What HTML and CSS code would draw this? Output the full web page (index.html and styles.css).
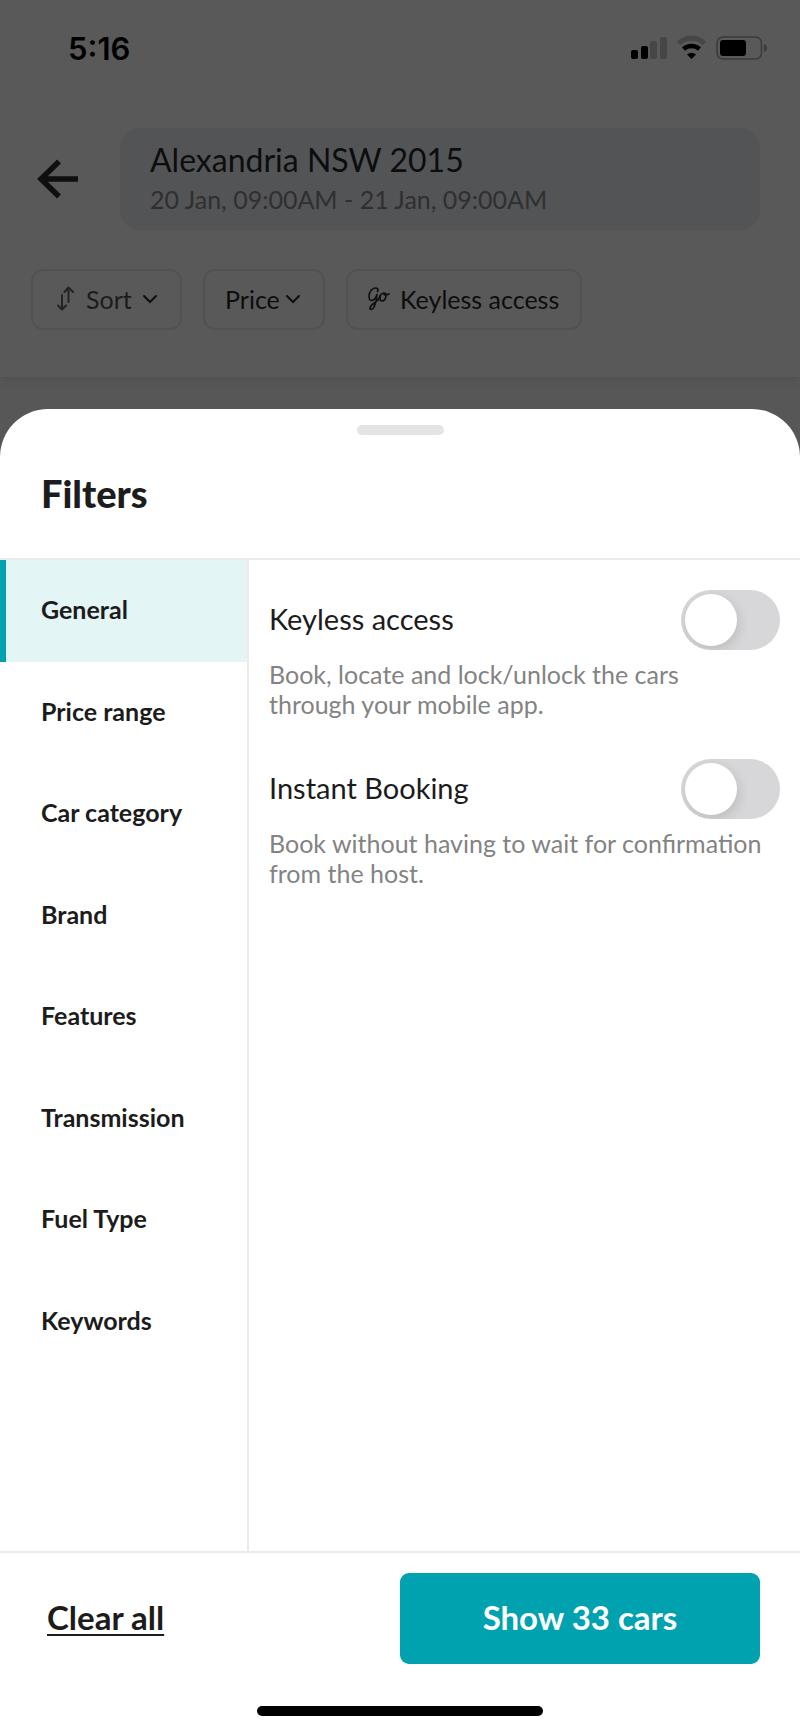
FILE: index.html
```
<!DOCTYPE html>
<html lang="en">
<head>
    <meta charset="UTF-8">
    <meta name="viewport" content="width=device-width, initial-scale=1.0">
    <title>Filters</title>
    <link rel="stylesheet" href="styles.css">
</head>
<body>
    <div class="backdrop">
        <div class="status-bar">
            <span class="time">5:16</span>
            <svg class="status-icons" width="138" height="26" viewBox="0 0 138 26">
                <rect x="0" y="15" width="7" height="9" rx="2"/>
                <rect x="10" y="11" width="7" height="13" rx="2"/>
                <rect class="faded" x="19" y="6" width="7" height="18" rx="2"/>
                <rect class="faded" x="29" y="2" width="7" height="22" rx="2"/>
                <path class="faded-line" d="M47.500 8.500a19 19 0 0 1 26 0" fill="none" stroke-width="5"/>
                <path d="M52.500 14a12 12 0 0 1 16 0" fill="none" stroke="#000" stroke-width="4.500"/>
                <path d="M60.500 24l-4.500-4.500a7 7 0 0 1 9 0z"/>
                <rect class="battery" x="86" y="2" width="44.500" height="22" rx="6" fill="none" stroke-width="1.500"/>
                <rect x="89" y="5" width="26" height="16" rx="3"/>
                <path class="battery-tip" d="M133 9c4 1.500 4 6.500 0 8z"/>
            </svg>
        </div>
        <div class="search-row">
            <button class="back" aria-label="Back">
                <svg width="42" height="40" viewBox="0 0 42 40" fill="none" stroke="#0f0f0f" stroke-width="5.500">
                    <path d="M41 20H5M22 2.500L4 20l18 17.500"/>
                </svg>
            </button>
            <button class="search-box">
                <span class="place">Alexandria NSW 2015</span>
                <span class="dates">20 Jan, 09:00AM - 21 Jan, 09:00AM</span>
            </button>
        </div>
        <div class="chips">
            <button class="chip sort">
                <svg width="18" height="26" viewBox="0 0 18 26" fill="none" stroke="#242424" stroke-width="2" stroke-linecap="round" stroke-linejoin="round">
                    <path d="M5 9v14M1 19.500L5 23.500l4-4M11.500 16V2M7.500 6l4-4.500L16 6"/>
                </svg>
                Sort
                <svg class="chevron" width="14" height="10" viewBox="0 0 14 10"><path d="M1 2l6 6 6-6"/></svg>
            </button>
            <button class="chip price">
                Price
                <svg class="chevron" width="14" height="10" viewBox="0 0 14 10"><path d="M1 2l6 6 6-6"/></svg>
            </button>
            <button class="chip keyless">
                <svg width="22" height="24" viewBox="0 0 22 24" fill="none" stroke="#101010" stroke-width="1.700" stroke-linecap="round" stroke-linejoin="round">
                    <path d="M9.500 4.500C10.500 2 9.500 1 7.500 1 4 1 1 5 1 9c0 3 1 4.500 2.500 4.500 2.500 0 4.500-3 5.500-6C9 12 7.500 17 6 20c-1 2.500-4 3.500-4 1 0-3 4.500-4.500 7.500-7.500 1.500-1.500 2-3.500 3-5"/>
                    <path d="M16 6c-2.500 0-4 2.500-4 5 0 2 .700 3 2 3 2.500 0 4-3 4-5.500C18 7 17.500 6 16 6c-1 2 1.500 2.500 5 1"/>
                </svg>
                Keyless access
            </button>
        </div>
    </div>

    <section class="sheet">
        <header class="sheet-header">
            <div class="handle"></div>
            <h1>Filters</h1>
        </header>
        <div class="sheet-body">
            <nav class="categories">
                <a href="#general" class="active">General</a>
                <a href="#price">Price range</a>
                <a href="#category">Car category</a>
                <a href="#brand">Brand</a>
                <a href="#features">Features</a>
                <a href="#transmission">Transmission</a>
                <a href="#fuel">Fuel Type</a>
                <a href="#keywords">Keywords</a>
            </nav>
            <div class="options" id="general">
                <div class="option">
                    <div class="option-row">
                        <label for="keyless">Keyless access</label>
                        <input type="checkbox" class="toggle" id="keyless">
                    </div>
                    <p>Book, locate and lock/unlock the cars through your mobile app.</p>
                </div>
                <div class="option">
                    <div class="option-row">
                        <label for="instant">Instant Booking</label>
                        <input type="checkbox" class="toggle" id="instant">
                    </div>
                    <p>Book without having to wait for confirmation from the host.</p>
                </div>
            </div>
        </div>
        <footer class="sheet-footer">
            <div class="actions">
                <button class="clear">Clear all</button>
                <button class="show">Show 33 cars</button>
            </div>
            <div class="home-indicator"></div>
        </footer>
    </section>
</body>
</html>
```
FILE: styles.css
```
* {
    box-sizing: border-box;
}
body {
    margin: 0;
    min-height: 100vh;
    display: flex;
    flex-direction: column;
    background: #575757;
    color: #1c1c1c;
    font-family: Lato, "Open Sans", sans-serif;
}
button {
    font-family: inherit;
    border: none;
    background: none;
    padding: 0;
    cursor: pointer;
}

/* dimmed search screen */
.backdrop {
    height: 377px;
    margin-bottom: 32px;
    background: #595959;
    box-shadow: 0 2px 6px #4f4f4f;
}
.status-bar {
    height: 96px;
    padding: 0 31px 0 68px;
    display: flex;
    align-items: center;
    justify-content: space-between;
}
.time {
    font-family: Inter, sans-serif;
    font-size: 31px;
    font-weight: 600;
    color: #000;
}
.faded {
    fill: #464646;
}
.faded-line {
    stroke: #464646;
}
.battery {
    stroke: #3a3a3a;
}
.battery-tip {
    fill: #3a3a3a;
}
.search-row {
    display: flex;
    align-items: center;
    gap: 41px;
    padding: 32px 40px 0 37px;
}
.back {
    display: flex;
}
.search-box {
    flex: 1;
    height: 102px;
    padding: 0 30px;
    border-radius: 20px;
    background: #535456;
    text-align: left;
}
.search-box span {
    display: block;
}
.place {
    font-size: 32px;
    line-height: 40px;
    color: #0d0d0d;
}
.dates {
    font-size: 25px;
    line-height: 38px;
    color: #2f2f2f;
}
.chips {
    display: flex;
    gap: 21px;
    padding: 39px 31px 0;
}
.chip {
    height: 61px;
    display: flex;
    align-items: center;
    border: 2px solid #525252;
    border-radius: 12px;
    padding-bottom: 2px;
    font-size: 25px;
    color: #0d0d0d;
}
.chip.sort {
    width: 151px;
    padding-left: 24px;
    gap: 11px;
    color: #1c1c1c;
}
.chip.price {
    width: 122px;
    padding-left: 20px;
    gap: 6px;
}
.chip.keyless {
    width: 236px;
    padding-left: 20px;
    gap: 10px;
}
.chevron {
    fill: none;
    stroke: #0d0d0d;
    stroke-width: 2;
    stroke-linecap: round;
}

/* bottom sheet */
.sheet {
    flex: 1;
    display: flex;
    flex-direction: column;
    background: #fff;
    border-radius: 48px 48px 0 0;
}
.sheet-header {
    height: 151px;
    padding-top: 16px;
    border-bottom: 2px solid #ebebeb;
}
.handle {
    width: 87px;
    height: 10px;
    margin: 0 auto;
    border-radius: 5px;
    background: #e4e4e4;
}
h1 {
    margin: 36px 41px 0;
    font-size: 38px;
    line-height: 44px;
    font-weight: 900;
}
.sheet-body {
    flex: 1;
    display: flex;
}
.categories {
    width: 249px;
    display: grid;
    grid-template-rows: repeat(8, 1fr);
    padding-bottom: 179px;
    border-right: 2px solid #ebebeb;
}
.categories a {
    display: flex;
    align-items: center;
    padding: 0 0 3px 41px;
    font-size: 25px;
    font-weight: 700;
    color: #1c1c1c;
    text-decoration: none;
}
.categories a.active {
    padding-left: 35px;
    border-left: 6px solid #00a2b0;
    background: #e3f5f5;
}
.options {
    flex: 1;
    padding: 30px 20px;
}
.option {
    margin-bottom: 40px;
}
.option-row {
    display: flex;
    align-items: center;
    justify-content: space-between;
    font-size: 29px;
}
.option-row label {
    padding-bottom: 3px;
}
.option p {
    margin: 9px 12px 0 0;
    font-size: 25px;
    line-height: 30px;
    color: #838383;
}
.toggle {
    appearance: none;
    width: 99px;
    height: 60px;
    margin: 0;
    padding: 4px;
    border-radius: 30px;
    background: #d7d7d9;
    overflow: hidden;
}
.toggle::before {
    content: "";
    display: block;
    width: 52px;
    height: 52px;
    border-radius: 50%;
    background: #fff;
    box-shadow: 2px 4px 12px rgba(0, 0, 0, 0.12);
}
.toggle:checked {
    background: #00a2b0;
}
.toggle:checked::before {
    margin-left: auto;
}
.sheet-footer {
    border-top: 2px solid #ebebeb;
}
.actions {
    display: flex;
    align-items: center;
    justify-content: space-between;
    padding: 20px 40px 0 47px;
}
.clear,
.show {
    padding-bottom: 3px;
    font-size: 33px;
    font-weight: 700;
}
.clear {
    color: #1c1c1c;
    text-decoration: underline;
    text-decoration-thickness: 2px;
    text-underline-offset: 4px;
    text-decoration-skip-ink: none;
}
.show {
    width: 360px;
    height: 91px;
    border-radius: 9px;
    background: #00a2b0;
    color: #fff;
}
.home-indicator {
    width: 286px;
    height: 10px;
    margin: 42px auto 15px;
    border-radius: 5px;
    background: #000;
}
```
